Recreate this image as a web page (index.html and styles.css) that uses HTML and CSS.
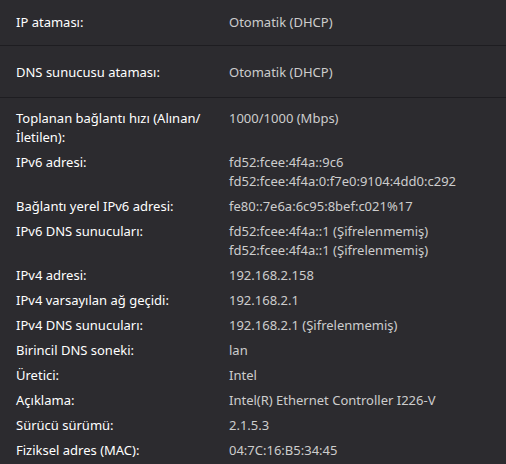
FILE: index.html
```html
<!DOCTYPE html>
<html lang="tr">
<head>
<meta charset="utf-8">
<title>Ağ özellikleri</title>
<link rel="stylesheet" href="styles.css">
</head>
<body>
<div class="panel">
    <div class="row row-first">
        <div class="label">IP ataması:</div>
        <div class="value">Otomatik (DHCP)</div>
    </div>
    <div class="row">
        <div class="label">DNS sunucusu ataması:</div>
        <div class="value">Otomatik (DHCP)</div>
    </div>
    <dl class="props">
        <dt>Toplanan bağlantı hızı (Alınan/ İletilen):</dt>
        <dd>1000/1000 (Mbps)</dd>
        <dt>IPv6 adresi:</dt>
        <dd>fd52:fcee:4f4a::9c6<br>fd52:fcee:4f4a:0:f7e0:9104:4dd0:c292</dd>
        <dt>Bağlantı yerel IPv6 adresi:</dt>
        <dd>fe80::7e6a:6c95:8bef:c021%17</dd>
        <dt>IPv6 DNS sunucuları:</dt>
        <dd>fd52:fcee:4f4a::1 (Şifrelenmemiş)<br>fd52:fcee:4f4a::1 (Şifrelenmemiş)</dd>
        <dt>IPv4 adresi:</dt>
        <dd>192.168.2.158</dd>
        <dt>IPv4 varsayılan ağ geçidi:</dt>
        <dd>192.168.2.1</dd>
        <dt>IPv4 DNS sunucuları:</dt>
        <dd>192.168.2.1 (Şifrelenmemiş)</dd>
        <dt>Birincil DNS soneki:</dt>
        <dd>lan</dd>
        <dt>Üretici:</dt>
        <dd>Intel</dd>
        <dt>Açıklama:</dt>
        <dd>Intel(R) Ethernet Controller I226-V</dd>
        <dt>Sürücü sürümü:</dt>
        <dd>2.1.5.3</dd>
        <dt>Fiziksel adres (MAC):</dt>
        <dd>04:7C:16:B5:34:45</dd>
    </dl>
</div>
</body>
</html>
```
FILE: styles.css
```css
html,body,div,dl,dt,dd{margin:0;padding:0;}
body{background:#2c2b2f;color:#fff;font:13px/19px "Segoe UI","Noto Sans",sans-serif;}
.panel{width:506px;height:464px;overflow:hidden;}
.row{display:flex;align-items:center;height:49px;padding:2px 0 0 16px;border-bottom:1px solid #1e1d21;}
.row-first{height:45px;padding-top:0;}
.row .label{width:213px;flex-shrink:0;}
.value,.props dd{color:#cdcdcd;}
.props{display:grid;grid-template-columns:195px 1fr;column-gap:18px;row-gap:6px;padding:11px 0 0 16px;}
```
